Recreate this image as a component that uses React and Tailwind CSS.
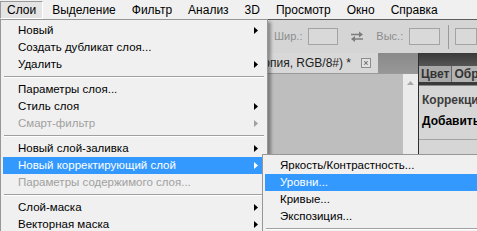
import React from 'react';

function Arrow({ color = '#000' }) {
  return (
    <svg width="4" height="7" viewBox="0 0 4 7" className="shrink-0">
      <polygon points="0,0 4,3.5 0,7" fill={color} />
    </svg>
  );
}

function SwapIcon() {
  return (
    <svg width="14" height="11" viewBox="0 0 14 11">
      <path d="M1 3.5h9" stroke="#7b7b7b" strokeWidth="1.5" />
      <polygon points="9,0.5 13,3.5 9,6.5" fill="#7b7b7b" />
      <path d="M4 8h9" stroke="#7b7b7b" strokeWidth="1.5" />
      <polygon points="5,5 1,8 5,11" fill="#7b7b7b" />
    </svg>
  );
}

const menubar = ['Слои', 'Выделение', 'Фильтр', 'Анализ', '3D', 'Просмотр', 'Окно', 'Справка'];

const layerItems = [
  { label: 'Новый', sub: true },
  { label: 'Создать дубликат слоя...' },
  { label: 'Удалить', sub: true },
  { sep: true },
  { label: 'Параметры слоя...' },
  { label: 'Стиль слоя', sub: true },
  { label: 'Смарт-фильтр', sub: true, disabled: true },
  { sep: true },
  { label: 'Новый слой-заливка', sub: true },
  { label: 'Новый корректирующий слой', sub: true, active: true },
  { label: 'Параметры содержимого слоя...', disabled: true },
  { sep: true },
  { label: 'Слой-маска', sub: true },
  { label: 'Векторная маска', sub: true },
];

const adjustItems = [
  { label: 'Яркость/Контрастность...' },
  { label: 'Уровни...', active: true },
  { label: 'Кривые...' },
  { label: 'Экспозиция...' },
  { sep: true },
];

function MenuList({ items }) {
  return items.map((item, i) =>
    item.sep ? (
      <div key={i} className="h-[8px] flex flex-col justify-center px-[1px]">
        <div className="h-[1px] bg-[#a0a0a0]" />
        <div className="h-[1px] bg-white" />
      </div>
    ) : (
      <div
        key={i}
        className={`h-[17px] flex items-center justify-between pl-[15px] pr-[7px] whitespace-nowrap ${
          item.active ? 'bg-[#3399ff] text-white' : item.disabled ? 'text-[#a0a0a0]' : 'text-black'
        }`}
      >
        <span>{item.label}</span>
        {item.sub && <Arrow color={item.active ? '#fff' : item.disabled ? '#a0a0a0' : '#000'} />}
      </div>
    )
  );
}

export default function App() {
  return (
    <div className="relative w-[477px] h-[231px] overflow-hidden bg-[#d4d4d4] font-['Liberation_Sans',Arial,sans-serif] text-[11.5px] leading-none">
      {/* menu bar */}
      <div className="h-[20px] flex items-center bg-[#f0f0f0] border-b border-[#5c5c5c] text-[12px] text-black">
        {menubar.map((m, i) => (
          <div
            key={m}
            className={`h-[18px] flex items-center px-[6px] mr-[2px] ${
              i === 0 ? 'bg-[#e4e4e4] border border-[#9a9a9a] border-r-white border-b-white' : 'border border-transparent'
            }`}
          >
            {m}
          </div>
        ))}
      </div>

      {/* options bar */}
      <div className="h-[33px] flex items-center pl-[274px] gap-[6px] bg-[#d5d5d5] text-[11px] text-[#8d8d8d]">
        <span>Шир.:</span>
        <div className="w-[42px] h-[17px] border border-[#a3a3a3] bg-[#d9d9d9]" />
        <div className="mx-[6px] flex items-center"><SwapIcon /></div>
        <span>Выс.:</span>
        <div className="w-[43px] h-[17px] border border-[#a3a3a3] bg-[#d9d9d9]" />
        <div className="ml-[2px] w-[1px] h-[24px] bg-[#9a9a9a]" />
        <div className="ml-[1px] w-[30px] h-[17px] border border-[#a3a3a3] bg-[#d9d9d9]" />
      </div>

      {/* workspace */}
      <div className="flex h-[178px]">
        <div className="w-[418px] shrink-0 flex flex-col">
          <div className="h-[20px] flex bg-gradient-to-b from-[#8a8a8a] to-[#979797]">
            <div className="w-[378px] flex items-center justify-end gap-[10px] pr-[7px] bg-[#d8d8d8] overflow-hidden whitespace-nowrap text-[12px] text-[#1e1e1e]">
              <span>Без имени-1 @ 100% (Слой 0 копия, RGB/8#) *</span>
              <div className="w-[10px] h-[10px] border border-[#8c8c8c] bg-[#e2e2e2] flex items-center justify-center text-[9px] text-[#555]">
                ×
              </div>
            </div>
          </div>
          <div className="flex-1 flex border-t border-[#9a9a9a]">
            <div className="flex-1 bg-[#bebebe]" />
            <div className="w-[15px] bg-[#ebebeb] flex justify-center pt-[7px]">
              <svg width="7" height="4" viewBox="0 0 7 4">
                <polygon points="0,4 3.5,0 7,4" fill="#a8a8a8" />
              </svg>
            </div>
          </div>
        </div>

        <div className="flex-1 min-w-0 overflow-hidden flex flex-col border-l border-[#2e2e2e] bg-[#d6d6d6]">
          <div className="h-[13px] bg-gradient-to-b from-[#3a3a3a] to-[#555555]" />
          <div className="h-[16px] flex items-end bg-[#5e5e5e] text-[12px] font-bold text-[#333] whitespace-nowrap">
            <div className="h-[16px] px-[2px] flex items-center bg-[#a9a9a9] border-r border-[#666]">Цвет</div>
            <div className="h-[16px] px-[2px] flex items-center bg-[#b3b3b3]">Образцы</div>
          </div>
          <div className="h-[4px] bg-[#3a3a3a] border-b border-[#888]" />
          <div className="pl-[3px] pt-[8px] text-[12px] font-bold whitespace-nowrap">
            <div className="text-[#3c3c3c]">Коррекция:</div>
            <div className="mt-[9px] text-black">Добавить</div>
          </div>
          <div className="mt-[12px] h-[1px] bg-[#a3a3a3]" />
        </div>
      </div>

      {/* Слои menu */}
      <div className="absolute left-0 top-[19px] w-[268px] p-[2px] bg-[#f0f0f0] border border-[#979797] shadow-[3px_3px_3px_rgba(0,0,0,0.35)]">
        <MenuList items={layerItems} />
      </div>

      {/* adjustment submenu */}
      <div className="absolute left-[262px] top-[154px] w-[240px] p-[2px] bg-[#f0f0f0] border border-[#979797] shadow-[3px_3px_3px_rgba(0,0,0,0.35)]">
        <MenuList items={adjustItems} />
      </div>
    </div>
  );
}
